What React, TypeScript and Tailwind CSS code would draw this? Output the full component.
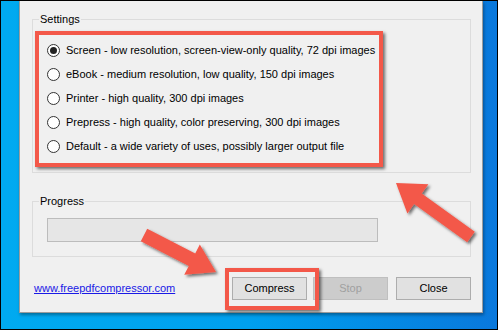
import React from "react";

const options = [
	{ name: "Screen", desc: "low resolution, screen-view-only quality, 72 dpi images", checked: true },
	{ name: "eBook", desc: "medium resolution, low quality, 150 dpi images", checked: false },
	{ name: "Printer", desc: "high quality, 300 dpi images", checked: false },
	{ name: "Prepress", desc: "high quality, color preserving, 300 dpi images", checked: false },
	{ name: "Default", desc: "a wide variety of uses, possibly larger output file", checked: false },
];

// polygon for a fat arrow from tail (x1,y1) to tip (x2,y2)
function arrowPoints(x1: number, y1: number, x2: number, y2: number, sw: number, hl: number, hw: number) {
	const dx = x2 - x1;
	const dy = y2 - y1;
	const len = Math.hypot(dx, dy);
	const ux = dx / len;
	const uy = dy / len;
	const px = -uy;
	const py = ux;
	const bx = x2 - ux * hl;
	const by = y2 - uy * hl;
	const pts = [
		[x1 + px * sw / 2, y1 + py * sw / 2],
		[bx + px * sw / 2, by + py * sw / 2],
		[bx + px * hw / 2, by + py * hw / 2],
		[x2, y2],
		[bx - px * hw / 2, by - py * hw / 2],
		[bx - px * sw / 2, by - py * sw / 2],
		[x1 - px * sw / 2, y1 - py * sw / 2],
	];
	return pts.map((p) => `${p[0].toFixed(1)},${p[1].toFixed(1)}`).join(" ");
}

function Radio({ checked }: { checked: boolean }) {
	return (
		<span className="w-[13px] h-[13px] rounded-full border border-[#333] bg-white flex items-center justify-center shrink-0">
			{checked && <span className="w-[7px] h-[7px] rounded-full bg-[#222]" />}
		</span>
	);
}

export default function App() {
	return (
		<div
			className="relative w-[498px] h-[330px] overflow-hidden border border-black bg-gradient-to-r from-[#00aaf0] via-[#00a0ee] to-[#0a78dc] text-[11px] text-black"
			style={{ fontFamily: "'Liberation Sans', Arial, sans-serif" }}
		>
			<div className="ml-[18px] w-[464px] bg-[#f0f0f0] border-x border-b border-[#9c9c9c] shadow-[1px_2px_3px_rgba(0,0,0,0.35)] pl-[12px] pr-[11px] pt-[11px] pb-[12px]">
				<fieldset className="border border-[#dcdcdc] pb-[14px]">
					<legend className="ml-[6px] px-[1px] leading-[14px]">Settings</legend>
					<div className="pt-[12px] pl-[14px] flex flex-col">
						{options.map((o) => (
							<div key={o.name} className="h-[24px] flex items-center gap-[6px] whitespace-nowrap">
								<Radio checked={o.checked} />
								<span>{o.name} - {o.desc}</span>
							</div>
						))}
					</div>
				</fieldset>
				<fieldset className="mt-[21px] border border-[#dcdcdc] pb-[14px]">
					<legend className="ml-[6px] px-[1px] leading-[14px]">Progress</legend>
					<div className="pt-[10px] pl-[14px]">
						<div className="w-[331px] h-[24px] bg-[#e6e6e6] border border-[#bcbcbc]" />
					</div>
				</fieldset>
				<div className="mt-[20px] h-[23px] flex items-center">
					<a href="#" className="ml-[2px] text-[#1a1ae6] underline">www.freepdfcompressor.com</a>
					<div className="ml-auto flex items-center">
						<button className="w-[75px] h-[23px] bg-[#e1e1e1] border border-[#adadad]">Compress</button>
						<button disabled className="ml-[6px] w-[75px] h-[23px] bg-[#cccccc] border border-[#bfbfbf] text-[#a0a0a0]">Stop</button>
						<button className="ml-[8px] w-[75px] h-[23px] bg-[#e1e1e1] border border-[#adadad]">Close</button>
					</div>
				</div>
			</div>

			{/* annotations */}
			<div className="absolute left-[34px] top-[30px] w-[348px] h-[136px] border-4 border-[#f35849] shadow-[2px_2px_3px_rgba(0,0,0,0.55)] pointer-events-none" />
			<div className="absolute left-[224px] top-[267px] w-[94px] h-[42px] border-4 border-[#f35849] shadow-[2px_2px_3px_rgba(0,0,0,0.55)] pointer-events-none" />
			<svg className="absolute left-0 top-0 pointer-events-none" width="498" height="330">
				<defs>
					<filter id="sh" x="-20%" y="-20%" width="140%" height="140%">
						<feDropShadow dx="2" dy="2" stdDeviation="1.5" floodColor="#000" floodOpacity="0.55" />
					</filter>
				</defs>
				<polygon points={arrowPoints(470, 236, 395, 182, 13, 27, 36)} fill="#f35849" filter="url(#sh)" />
				<polygon points={arrowPoints(143, 234, 215, 271, 14, 27, 34)} fill="#f35849" filter="url(#sh)" />
			</svg>
		</div>
	);
}
